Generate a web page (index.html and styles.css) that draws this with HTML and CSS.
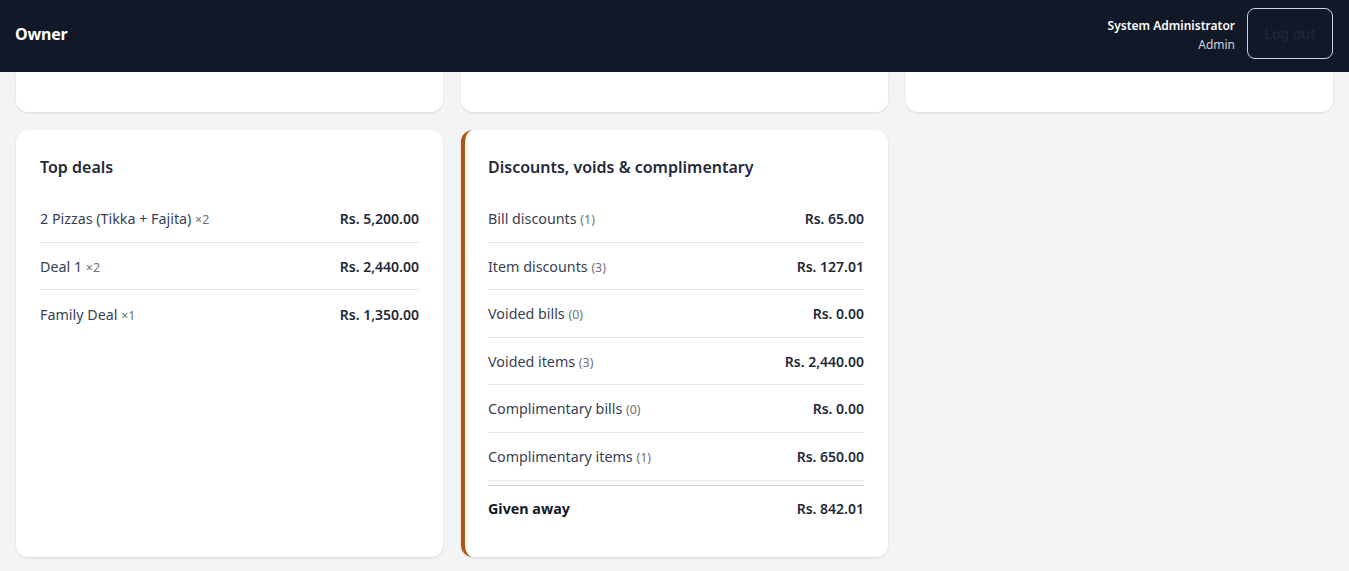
FILE: index.html
```html
<!DOCTYPE html>
<html lang="en">
<head>
<meta charset="utf-8">
<title>Owner</title>
<link rel="stylesheet" href="styles.css">
</head>
<body>
<header class="topbar">
  <div class="brand">Owner</div>
  <div class="user-area">
    <div class="user-info">
      <div class="user-name">System Administrator</div>
      <div class="user-role">Admin</div>
    </div>
    <button class="logout" type="button">Log out</button>
  </div>
</header>
<main class="content">
  <div class="grid">
    <div class="card card-cut"></div>
    <div class="card card-cut"></div>
    <div class="card card-cut"></div>

    <section class="card">
      <h2 class="card-title">Top deals</h2>
      <ul class="list list-plain">
        <li class="row"><span class="label">2 Pizzas (Tikka + Fajita) <span class="count">×2</span></span><span class="value">Rs. 5,200.00</span></li>
        <li class="row"><span class="label">Deal 1 <span class="count">×2</span></span><span class="value">Rs. 2,440.00</span></li>
        <li class="row"><span class="label">Family Deal <span class="count">×1</span></span><span class="value">Rs. 1,350.00</span></li>
      </ul>
    </section>

    <section class="card card-accent">
      <h2 class="card-title">Discounts, voids &amp; complimentary</h2>
      <ul class="list">
        <li class="row"><span class="label">Bill discounts <span class="count">(1)</span></span><span class="value">Rs. 65.00</span></li>
        <li class="row"><span class="label">Item discounts <span class="count">(3)</span></span><span class="value">Rs. 127.01</span></li>
        <li class="row"><span class="label">Voided bills <span class="count">(0)</span></span><span class="value">Rs. 0.00</span></li>
        <li class="row"><span class="label">Voided items <span class="count">(3)</span></span><span class="value">Rs. 2,440.00</span></li>
        <li class="row"><span class="label">Complimentary bills <span class="count">(0)</span></span><span class="value">Rs. 0.00</span></li>
        <li class="row"><span class="label">Complimentary items <span class="count">(1)</span></span><span class="value">Rs. 650.00</span></li>
      </ul>
      <div class="row total"><span class="label">Given away</span><span class="value">Rs. 842.01</span></div>
    </section>
  </div>
</main>
</body>
</html>
```
FILE: styles.css
```css
* { box-sizing: border-box; }
html, body { margin: 0; padding: 0; }
body {
  font-family: "Noto Sans", "Open Sans", sans-serif;
  background: #f3f4f6;
  color: #1f2937;
  height: 571px;
  overflow: hidden;
}
.topbar {
  height: 72px;
  background: #111827;
  color: #fff;
  display: flex;
  align-items: center;
  justify-content: space-between;
  padding: 0 16px 0 15px;
}
.brand {
  font-size: 16px;
  font-weight: 700;
  letter-spacing: -0.2px;
  margin-bottom: 4px;
}
.user-area {
  display: flex;
  align-items: center;
  gap: 12px;
  height: 100%;
  padding: 8px 0 13px;
}
.user-info {
  text-align: right;
  font-size: 12px;
  line-height: 19px;
  margin-top: 2px;
}
.user-name { font-weight: 600; }
.user-role { color: #d1d5db; }
.logout {
  width: 86px;
  height: 51px;
  background: transparent;
  border: 1px solid #cbd5e1;
  border-radius: 8px;
  color: #1f2937;
  font-family: inherit;
  font-size: 14px;
  font-weight: 500;
}
.content {
  padding: 0 16px 16px;
}
.grid {
  display: grid;
  grid-template-columns: repeat(3, 1fr);
  gap: 18px;
  align-items: start;
}
.grid > .card:nth-child(4) { align-self: stretch; }
.card {
  background: #fff;
  border-radius: 12px;
  box-shadow: 0 1px 3px rgba(0,0,0,0.08), 0 1px 2px rgba(0,0,0,0.04);
  padding: 24px;
}
.card-cut {
  height: 40px;
  padding: 0;
  border-top-left-radius: 0;
  border-top-right-radius: 0;
}
.card-accent {
  border-left: 4px solid #b45309;
  padding-left: 23px;
}
.card-title {
  margin: 0 0 15px;
  font-size: 16px;
  line-height: 26px;
  font-weight: 600;
  color: #1f2937;
}
.list {
  list-style: none;
  margin: 0;
  padding: 0;
}
.row {
  display: flex;
  justify-content: space-between;
  align-items: center;
  padding: 13px 0 12.6px;
  border-bottom: 1px solid #e5e7eb;
  font-size: 14.3px;
  line-height: 21px;
  height: 47.6px;
}
.list-plain .row:last-child { border-bottom: none; }
.label { color: #374151; }
.count { color: #6b7280; font-size: 12.4px; line-height: 1; }
.value { font-weight: 600; color: #1f2937; font-size: 14px; }
.total {
  margin-top: 4px;
  border-top: 1px solid #d1d5db;
  border-bottom: none;
  padding: 12px 0 14px;
  height: auto;
}
.total .label { font-weight: 700; color: #111827; }
```
